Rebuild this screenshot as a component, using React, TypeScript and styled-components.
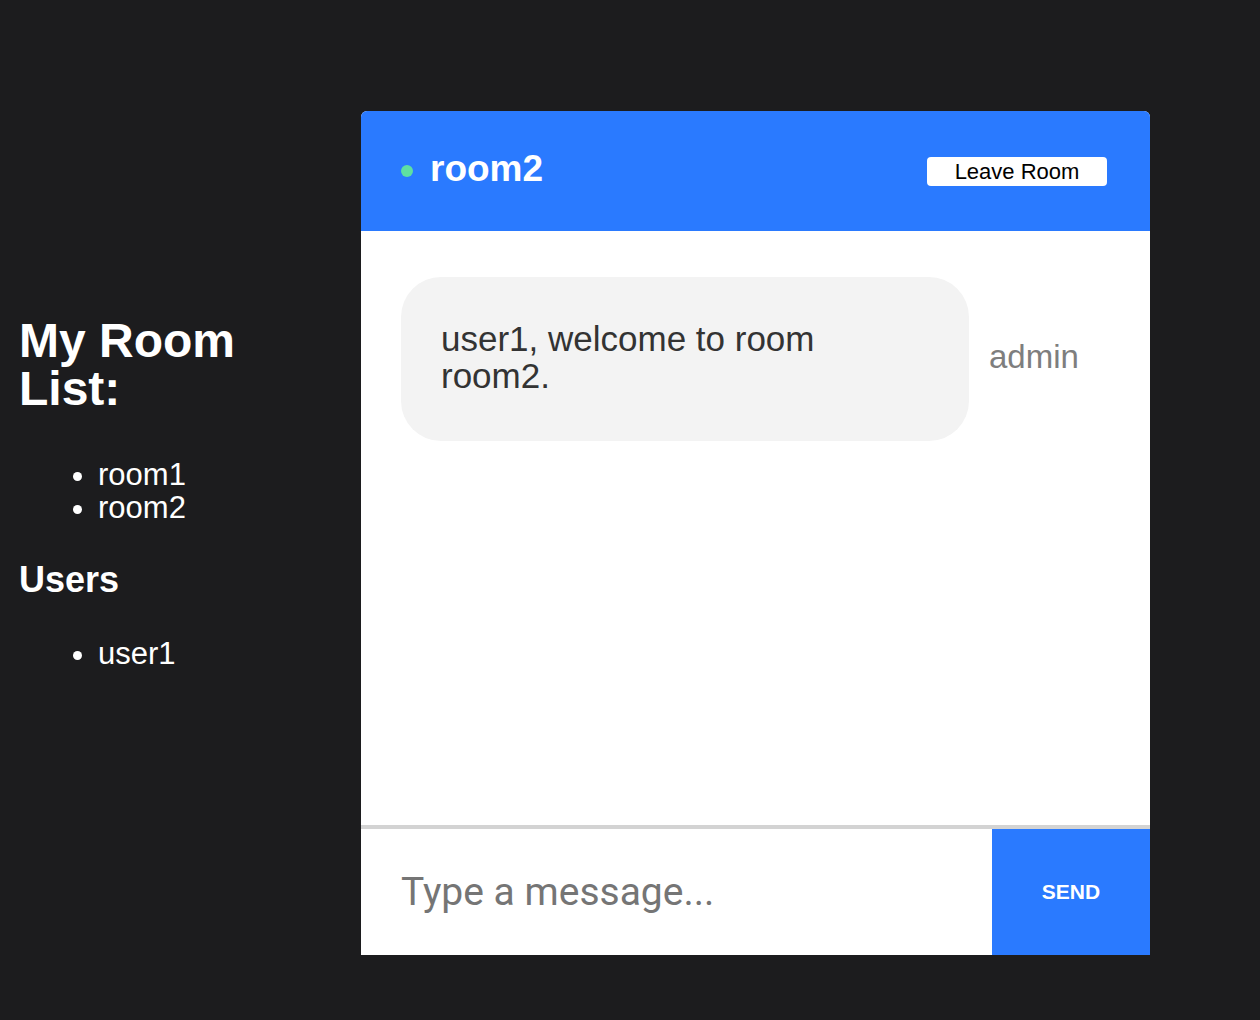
import React from "react";
import styled, { createGlobalStyle } from "styled-components";

const Global = createGlobalStyle`
  html, body { margin: 0; padding: 0; background: #1c1c1e; }
  body { font-family: "Liberation Sans", Arial, sans-serif; }
`;

const Page = styled.div`
  display: flex;
  align-items: flex-start;
  min-height: 1020px;
  padding-top: 111px;
  box-sizing: border-box;
`;

const Sidebar = styled.aside`
  width: 361px;
  flex: none;
  box-sizing: border-box;
  padding: 206px 90px 0 19px;
  color: #fff;
`;

const Title = styled.h1`
  margin: 0;
  font-size: 48px;
  line-height: 48px;
  font-weight: 700;
`;

const SubTitle = styled.h2`
  margin: 0;
  font-size: 36px;
  line-height: 40px;
  font-weight: 700;
`;

const List = styled.ul<{ $top: number; $bottom: number }>`
  margin: ${(p) => p.$top}px 0 ${(p) => p.$bottom}px;
  padding-left: 79px;
  font-size: 31px;
  line-height: 33px;
`;

const Panel = styled.section`
  width: 789px;
  height: 844px;
  flex: none;
  display: flex;
  flex-direction: column;
  background: #fff;
  border-radius: 6px 6px 0 0;
  overflow: hidden;
`;

const Header = styled.header`
  height: 120px;
  flex: none;
  background: #2a7aff;
  display: flex;
  align-items: center;
  justify-content: space-between;
  padding: 0 43px 0 40px;
`;

const RoomName = styled.div`
  display: flex;
  align-items: center;
  gap: 17px;
  color: #fff;
  font-size: 37px;
  font-weight: 700;
  margin-top: -4px;
`;

const Dot = styled.span`
  width: 12px;
  height: 12px;
  border-radius: 50%;
  background: #5ee0a2;
  margin-top: 4px;
`;

const LeaveButton = styled.button`
  width: 180px;
  height: 29px;
  background: #fff;
  border: none;
  border-radius: 4px;
  color: #000;
  font-family: "Liberation Sans", Arial, sans-serif;
  font-size: 22px;
  line-height: 29px;
  padding: 0;
  cursor: pointer;
`;

const Messages = styled.div`
  flex: 1;
  padding: 46px 40px;
`;

const MessageRow = styled.div`
  display: flex;
  align-items: center;
  gap: 20px;
`;

const Bubble = styled.div`
  width: 568px;
  flex: none;
  box-sizing: border-box;
  background: #f3f3f3;
  border-radius: 40px;
  padding: 43px 90px 47px 40px;
  color: #333;
  font-size: 35px;
  line-height: 37px;
`;

const Author = styled.span`
  color: #7e7e7e;
  font-size: 33px;
  margin-bottom: 5px;
`;

const Composer = styled.form`
  height: 126px;
  flex: none;
  display: flex;
  border-top: 4px solid #d3d3d3;
`;

const Input = styled.input`
  flex: 1;
  min-width: 0;
  border: none;
  outline: none;
  padding: 0 0 0 40px;
  font-family: Roboto, "Liberation Sans", sans-serif;
  font-size: 39px;
  color: #333;
  &::placeholder { color: #757575; }
`;

const SendButton = styled.button`
  width: 158px;
  border: none;
  background: #2a7aff;
  color: #fff;
  font-family: "Liberation Sans", Arial, sans-serif;
  font-size: 21px;
  font-weight: 700;
  padding: 0;
  cursor: pointer;
`;

export default function App() {
  return (
    <>
      <Global />
      <Page>
        <Sidebar>
          <Title>My Room List:</Title>
          <List $top={45} $bottom={36}>
            <li>room1</li>
            <li>room2</li>
          </List>
          <SubTitle>Users</SubTitle>
          <List $top={37} $bottom={0}>
            <li>user1</li>
          </List>
        </Sidebar>
        <Panel>
          <Header>
            <RoomName>
              <Dot />
              room2
            </RoomName>
            <LeaveButton type="button">Leave Room</LeaveButton>
          </Header>
          <Messages>
            <MessageRow>
              <Bubble>user1, welcome to room room2.</Bubble>
              <Author>admin</Author>
            </MessageRow>
          </Messages>
          <Composer onSubmit={(e) => e.preventDefault()}>
            <Input placeholder="Type a message..." />
            <SendButton type="submit">SEND</SendButton>
          </Composer>
        </Panel>
      </Page>
    </>
  );
}
